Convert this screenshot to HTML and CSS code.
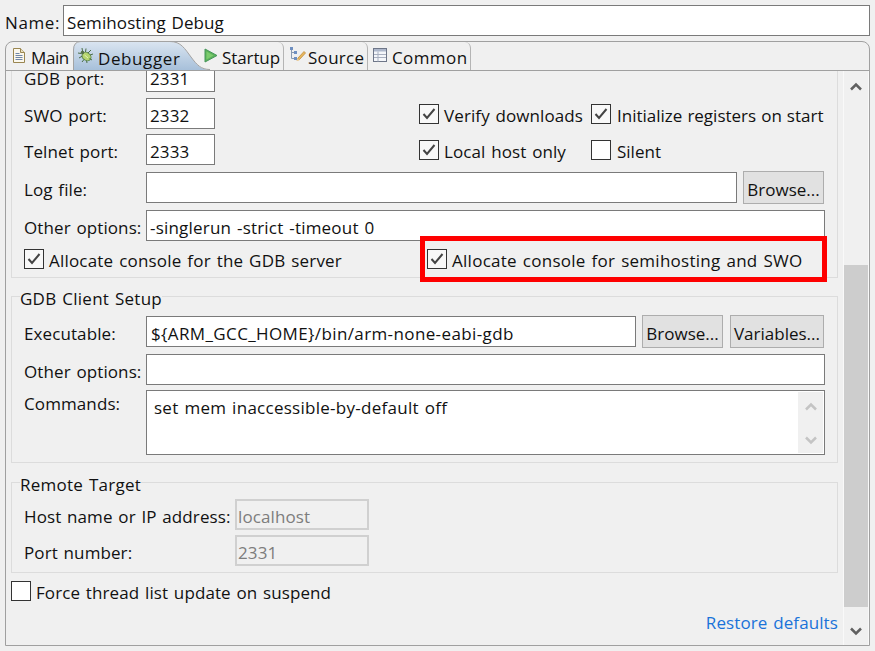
FILE: index.html
```html
<!DOCTYPE html>
<html lang="en">
<head>
<meta charset="utf-8">
<title>Semihosting Debug</title>
<link rel="stylesheet" href="styles.css">
</head>
<body>
<div class="name-row">
  <span class="name-label">Name:</span>
  <div class="field name-field">Semihosting Debug</div>
</div>
<div class="folder">
  <div class="tabs">
    <div class="tab tab-main">
      <svg class="ico" width="14" height="17" viewBox="0 0 14 17"><path d="M1.500 1.500h7l4 4v10h-11z" fill="#fbf8ee" stroke="#9a8650"/><path d="M8.500 1.500v4h4" fill="#e8dfc0" stroke="#9a8650"/><path d="M3.500 6.500h4M3.500 8.500h7M3.500 10.500h7M3.500 12.500h7" stroke="#6f86a8"/></svg>
      <span class="tab-text">Main</span>
    </div>
    <div class="tab tab-debugger">
      <svg class="active-shape" width="137" height="29" viewBox="0 0 137 29"><defs><linearGradient id="tabfill" x1="0" y1="0" x2="0" y2="1"><stop offset="0" stop-color="#d9e4f0"/><stop offset="1" stop-color="#a7c0da"/></linearGradient></defs><path d="M0 29V9Q0 1 8 1H97C108 1 112 8 118 16C124 24 128 29 137 29Z" fill="url(#tabfill)"/><path d="M.5 29V9Q.5 .5 8 .5H97C108 .5 112 8 118 16C124 24 128 28.500 137 28.500" fill="none" stroke="#a3a3a3"/></svg>
      <svg class="ico" width="17" height="17" viewBox="0 0 17 17"><ellipse cx="9.500" cy="9.500" rx="4.800" ry="3.800" transform="rotate(35 9.500 9.500)" fill="#b5d56e" stroke="#5f8a48"/><circle cx="5.500" cy="5.500" r="1.800" fill="#55704a"/><path d="M1 6l3 .500M5 1l.500 3M2 11l3.500-2M9 1.500l-.5 3.500M14 3l-3 3M16 7l-3 1M15 13l-2.500-1.500M10 16l-.5-2.500M5 15l2-2.500" stroke="#4b6e48" fill="none"/><path d="M7.500 8l3.500 3" stroke="#e4f1b8"/></svg>
      <span class="tab-text tab-text-active">Debugger</span>
    </div>
    <div class="tab tab-startup">
      <svg class="ico" width="14" height="17" viewBox="0 0 14 17"><path d="M1 2l12 6.500L1 15z" fill="#5cb25a" stroke="#46965a"/><path d="M2.500 4.500l7 4-7 4z" fill="#7ccc6e"/></svg>
      <span class="tab-text">Startup</span>
    </div>
    <div class="tab tab-source">
      <svg class="ico" width="17" height="18" viewBox="0 0 17 18"><path d="M2.500 3v9.500h3M2.500 6.500h3" fill="none" stroke="#8a9ab0"/><path d="M1 1h3v3H1zM5 5h3v3H5zM5 11h3v3H5z" fill="#6f8fc0"/><path d="M9 12l6-6.500 1.500 1.500-6 6.500-2.500 1z" fill="#e9b95e" stroke="#c08b3a" stroke-width=".8"/><path d="M8 15l.5-2.500 2 2z" fill="#f2d9ab"/></svg>
      <span class="tab-text">Source</span>
    </div>
    <div class="tab tab-common">
      <svg class="ico" width="14" height="14" viewBox="0 0 14 14"><rect x=".5" y=".5" width="13" height="13" fill="#f4f6fa" stroke="#6e7688"/><path d="M1 1h12v2.500H1z" fill="#aeb8cc"/><path d="M1 6.500h12M1 9.500h12M5 3.500v10" stroke="#a9b0c0"/></svg>
      <span class="tab-text">Common</span>
    </div>
  </div>
  <div class="pane">
    <div class="scroller">
      <div class="content">
        <div class="group group-server">
          <div class="row row-31 gap-6"><span class="lbl">GDB port:</span><div class="field port">2331</div></div>
          <div class="row row-31 gap-5">
            <span class="lbl">SWO port:</span><div class="field port">2332</div>
            <span class="check col-a"><span class="cb checked"><svg width="18" height="18" viewBox="0 0 18 18"><path d="M3.500 9l3.500 4 7.500-9" fill="none" stroke="#444" stroke-width="2"/></svg></span><span class="t">Verify downloads</span></span>
            <span class="check col-b"><span class="cb checked"><svg width="18" height="18" viewBox="0 0 18 18"><path d="M3.500 9l3.500 4 7.500-9" fill="none" stroke="#444" stroke-width="2"/></svg></span><span class="t">Initialize registers on start</span></span>
          </div>
          <div class="row row-31 gap-6">
            <span class="lbl">Telnet port:</span><div class="field port">2333</div>
            <span class="check col-a"><span class="cb checked"><svg width="18" height="18" viewBox="0 0 18 18"><path d="M3.500 9l3.500 4 7.500-9" fill="none" stroke="#444" stroke-width="2"/></svg></span><span class="t">Local host only</span></span>
            <span class="check col-b"><span class="cb"></span><span class="t">Silent</span></span>
          </div>
          <div class="row row-33 gap-6"><span class="lbl">Log file:</span><div class="field log"></div><div class="btn btn-browse">Browse...</div></div>
          <div class="row row-31 gap-8"><span class="lbl">Other options:</span><div class="field wide">-singlerun -strict -timeout 0</div></div>
          <div class="row row-20">
            <span class="check col-left"><span class="cb checked"><svg width="18" height="18" viewBox="0 0 18 18"><path d="M3.500 9l3.500 4 7.500-9" fill="none" stroke="#444" stroke-width="2"/></svg></span><span class="t">Allocate console for the GDB server</span></span>
            <span class="check col-right"><span class="cb checked"><svg width="18" height="18" viewBox="0 0 18 18"><path d="M3.500 9l3.500 4 7.500-9" fill="none" stroke="#444" stroke-width="2"/></svg></span><span class="t">Allocate console for semihosting and SWO</span></span>
          </div>
          <div class="highlight"></div>
        </div>
        <div class="group group-client">
          <div class="legend">GDB Client Setup</div>
          <div class="row row-33 gap-6"><span class="lbl">Executable:</span><div class="field exe">${ARM_GCC_HOME}/bin/arm-none-eabi-gdb</div><div class="btn btn-browse">Browse...</div><div class="btn btn-vars">Variables...</div></div>
          <div class="row row-31 gap-5"><span class="lbl">Other options:</span><div class="field wide"></div></div>
          <div class="row row-65">
            <span class="lbl lbl-top">Commands:</span>
            <div class="field cmds">
              <div class="cmds-text">set mem inaccessible-by-default off</div>
              <div class="mini-bar">
                <svg width="14" height="9" viewBox="0 0 14 9"><path d="M2 7.500l5-5 5 5" fill="none" stroke="#c4c4c4" stroke-width="2.500"/></svg>
                <svg width="14" height="9" viewBox="0 0 14 9"><path d="M2 1.500l5 5 5-5" fill="none" stroke="#c4c4c4" stroke-width="2.500"/></svg>
              </div>
            </div>
          </div>
        </div>
        <div class="group group-remote">
          <div class="legend">Remote Target</div>
          <div class="row row-31 gap-5"><span class="lbl lbl-host">Host name or IP address:</span><div class="field off">localhost</div></div>
          <div class="row row-31"><span class="lbl lbl-host">Port number:</span><div class="field off">2331</div></div>
        </div>
        <span class="check force"><span class="cb"></span><span class="t">Force thread list update on suspend</span></span>
        <div class="restore">Restore defaults</div>
      </div>
    </div>
    <div class="vbar">
      <div class="arrow arrow-up"><svg width="14" height="9" viewBox="0 0 14 9"><path d="M2 7.500l5-5 5 5" fill="none" stroke="#606060" stroke-width="2.500"/></svg></div>
      <div class="thumb"></div>
      <div class="arrow arrow-down"><svg width="14" height="9" viewBox="0 0 14 9"><path d="M2 1.500l5 5 5-5" fill="none" stroke="#606060" stroke-width="2.500"/></svg></div>
    </div>
  </div>
</div>
</body>
</html>
```

FILE: styles.css
```css
* { box-sizing: border-box; }
html, body { margin: 0; height: 651px; overflow: hidden; }
body {
  background: #f0f0f0;
  color: #111;
  font-family: "Open Sans", "Noto Sans", sans-serif;
  font-size: 17px;
  line-height: 24px;
  letter-spacing: .1px;
  word-spacing: 1.2px;
  padding: 5px;
  display: flex;
  flex-direction: column;
}
.name-row { display: flex; align-items: center; height: 31px; margin-bottom: 5px; }
.name-label { width: 58px; padding-top: 5px; letter-spacing: .6px; }
.field {
  background: #fff;
  border: 1px solid #7a7a7a;
  height: 31px;
  padding: 5px 4px 0 3px;
  white-space: nowrap;
  overflow: hidden;
  flex: none;
}
.name-field { width: 807px; }
.folder {
  width: 865px;
  height: 605px;
  border: 1px solid #a0a0a0;
  border-radius: 8px 8px 0 0;
  display: flex;
  flex-direction: column;
}
.tabs { display: flex; height: 29px; border-bottom: 1px solid #a0a0a0; flex: none; }
.tab {
  display: flex;
  align-items: center;
  height: 28px;
  border-right: 1px solid #b4b4b4;
  border-top-right-radius: 6px;
  position: relative;
  white-space: nowrap;
}
.tab-text { position: relative; padding-top: 4px; letter-spacing: 0; }
.ico { flex: none; position: relative; margin-top: -2px; }
.tab-main { width: 67px; padding-left: 6px; gap: 5px; border-right: 0; }
.tab-main .tab-text { letter-spacing: -.4px; }
.tab-debugger { width: 125px; padding-left: 4px; gap: 4px; border-right: 0; height: 29px; z-index: 1; }
.active-shape { position: absolute; left: 0; top: -1px; }
.tab-text-active { letter-spacing: .6px; }
.tab-startup { width: 86px; padding-left: 6px; gap: 4px; }
.tab-startup .tab-text { letter-spacing: -.1px; }
.tab-source { width: 84px; padding-left: 5px; gap: 2px; }
.tab-source .tab-text { letter-spacing: .3px; }
.tab-common { width: 103px; padding-left: 5px; gap: 5px; }
.tab-common .tab-text { letter-spacing: .4px; }
.pane { flex: 1; display: flex; min-height: 0; }
.scroller { flex: 1; overflow: hidden; min-width: 0; }
.content { margin-top: -10px; padding: 0 5px; display: flex; flex-direction: column; }
.group { border: 1px solid #dcdcdc; padding: 0 12px; position: relative; flex: none; }
.group-server { border-top: 0; height: 217px; }
.group-client { margin-top: 18px; height: 167px; padding-top: 7px; }
.group-remote { margin-top: 19px; height: 91px; padding-top: 7px; }
.legend {
  margin: -20px 0 4px -4px;
  width: fit-content;
  background: #f0f0f0;
  padding-top: 3px;
  height: 27px;
  letter-spacing: .25px;
}
.group-remote .legend { margin-bottom: 2px; }
.row { display: flex; align-items: center; }
.row-31 { height: 31px; }
.row-33 { height: 33px; }
.row-20 { height: 20px; }
.row-65 { height: 65px; align-items: flex-start; }
.gap-5 { margin-bottom: 5px; }
.gap-6 { margin-bottom: 6px; }
.gap-8 { margin-bottom: 8px; }
.lbl { width: 122px; flex: none; white-space: nowrap; padding-top: 4px; }
.lbl-top { padding-top: 2px; }
.lbl-host { width: 211px; }
.port { width: 69px; }
.log { width: 591px; }
.wide { width: 679px; letter-spacing: .2px; }
.exe { width: 490px; padding-left: 4px; letter-spacing: .38px; }
.off { width: 134px; background: #f0f0f0; border: 2px solid #d0d0d0; color: #7d7d7d; padding: 4px 1px 0; }
.btn {
  background: #e1e1e1;
  border: 1px solid #adadad;
  height: 33px;
  padding-top: 4px;
  display: flex;
  align-items: center;
  justify-content: center;
  white-space: nowrap;
  flex: none;
  letter-spacing: 0;
}
.btn-browse { width: 81px; margin-left: 6px; }
.btn-vars { width: 94px; margin-left: 7px; }
.check { display: inline-flex; align-items: center; gap: 5px; white-space: nowrap; }
.t { padding-top: 4px; }
.cb {
  width: 20px;
  height: 20px;
  flex: none;
  background: #fff;
  border: 1px solid #333;
  display: block;
}
.cb svg { display: block; }
.cb.checked { background: #f8f8f8; }
.col-a { margin-left: 204px; width: 172px; flex: none; }
.col-b { flex: none; gap: 6px; letter-spacing: 0; word-spacing: .6px; }
.col-left { width: 403px; flex: none; letter-spacing: .2px; }
.col-right { flex: none; letter-spacing: .27px; }
.highlight {
  position: absolute;
  left: 408px;
  top: 175px;
  width: 407px;
  height: 46px;
  border: 5px solid #fe0000;
}
.cmds { width: 679px; height: 65px; display: flex; justify-content: space-between; padding: 1px; letter-spacing: .27px; }
.cmds-text { padding: 4px 0 0 6px; }
.mini-bar {
  width: 25px;
  background: #f0f0f0;
  display: flex;
  flex-direction: column;
  align-items: center;
  justify-content: space-between;
  padding: 10px 0 8px;
}
.mini-bar svg { display: block; }
.force { margin-top: 8px; height: 20px; }
.restore { color: #1a73d9; text-align: right; margin-top: 10px; height: 24px; }
.vbar {
  width: 26px;
  flex: none;
  border-left: 1px solid #f9f9f9;
  border-right: 1px solid #f9f9f9;
  display: flex;
  flex-direction: column;
  align-items: stretch;
}
.arrow { display: flex; justify-content: center; }
.arrow svg { display: block; }
.arrow-up { padding-top: 11px; height: 194px; }
.thumb { height: 342px; background: #cdcdcd; flex: none; }
.arrow-down { padding-top: 20px; }
```
